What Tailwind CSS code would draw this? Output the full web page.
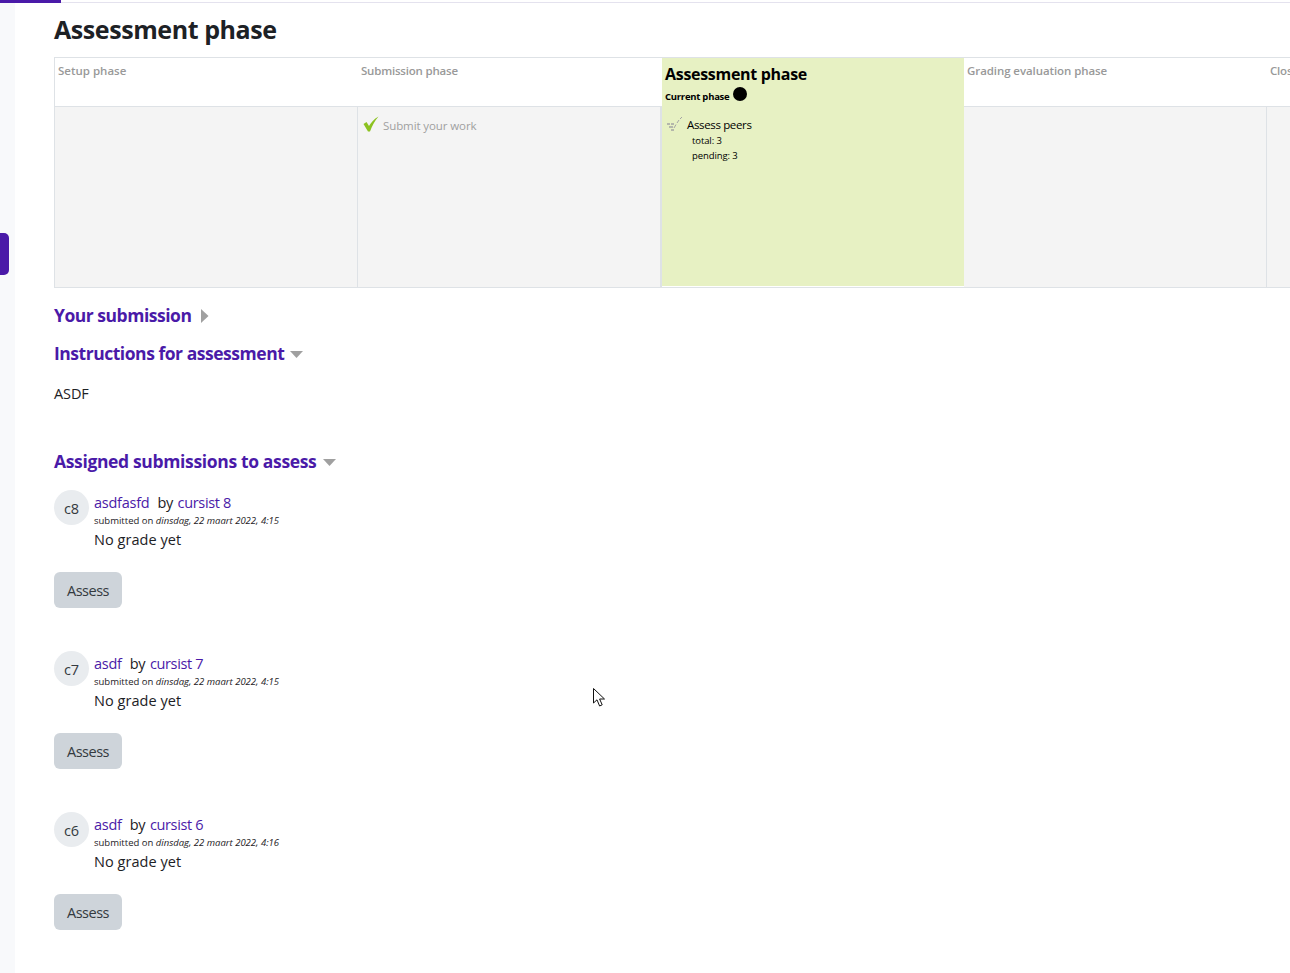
<!DOCTYPE html>
<html lang="en">
<head>
  <meta charset="UTF-8">
  <title>Assessment phase</title>
  <script src="https://cdn.jsdelivr.net/npm/@tailwindcss/browser@4"></script>
</head>
<body class="h-[973px] w-[1290px] overflow-hidden bg-white relative font-['Open_Sans','Noto_Sans',sans-serif] text-[#1d2125]">

  <!-- top progress bar -->
  <div class="h-[3px] border-b border-[#e4e2ee] relative">
    <div class="h-[3px] w-[61px] bg-[#4a1aa8]"></div>
  </div>

  <div class="flex">
    <!-- left strip -->
    <div class="w-[15px] h-[970px] bg-[#f8f9fb] shrink-0"></div>

    <main class="pl-[39px] w-[1275px] overflow-hidden">
      <h2 class="text-[25px] leading-[30px] font-bold tracking-[-0.42px] mt-[11px] mb-[13px]">Assessment phase</h2>

      <!-- phases -->
      <div class="w-[1400px] h-[231px] border-t border-b border-l border-[#dee2e6] flex text-[#999]">
        <div class="w-[303px] shrink-0 flex flex-col">
          <div class="h-[49px] border-b border-[#dee2e6] pl-[3px] pt-[5px] text-[11.5px] leading-[16px] font-semibold">Setup phase</div>
          <div class="flex-1 bg-[#f4f4f4] border-r border-[#dee2e6]"></div>
        </div>
        <div class="w-[304px] shrink-0 flex flex-col">
          <div class="h-[49px] border-b border-[#dee2e6] pl-[3px] pt-[5px] text-[11.5px] leading-[16px] font-semibold tracking-[-0.2px]">Submission phase</div>
          <div class="flex-1 bg-[#f4f4f4] border-r-2 border-[#dee2e6] pl-[5px] pt-[10px] flex items-start">
            <svg class="w-[16px] h-[16px] -mt-[1px] shrink-0" viewBox="0 0 16 16"><path d="M0.5 8 L3.5 6 L6 10 C8 6.5 11 3 15.5 0.5 C11.5 5 9 10 7 15.5 L5 15.5 Z" fill="#8cc220"/></svg>
            <span class="ml-[4px] text-[11.5px] leading-[18px] tracking-[-0.1px] text-[#a0a0a0]">Submit your work</span>
          </div>
        </div>
        <div class="w-[302px] shrink-0 h-[228px] bg-[#e7f1c3] pl-[3px] pt-[5px] text-black">
          <div class="text-[16px] leading-[22px] font-bold tracking-[-0.3px]">Assessment phase</div>
          <div class="flex items-center h-[16px] mt-[4px] text-[9.5px] font-bold tracking-[-0.25px]">
            Current phase
            <span class="ml-[4px] mb-[6px] w-[14px] h-[14px] rounded-full bg-black"></span>
          </div>
          <div class="flex items-start mt-[12px] pl-[2px]">
            <svg class="w-[16px] h-[16px] -mt-[1px] shrink-0" viewBox="0 0 16 16" fill="none" stroke="#a4a4a4" stroke-width="1.4"><path d="M0 8 H3 M4 8 H7 M2 11 H6 M4 14 H7"/><path d="M7 12 L9 8.5 M10 7 L12 4 M13 3 L15 1" stroke-width="1"/></svg>
            <div class="ml-[4px]">
              <div class="text-[11.5px] leading-[16px] tracking-[-0.35px]">Assess peers</div>
              <div class="pl-[5px] text-[9.5px] leading-[15px] tracking-[-0.1px]">total: 3</div>
              <div class="pl-[5px] text-[9.5px] leading-[15px] tracking-[-0.1px]">pending: 3</div>
            </div>
          </div>
        </div>
        <div class="w-[303px] shrink-0 flex flex-col">
          <div class="h-[49px] border-b border-[#dee2e6] pl-[3px] pt-[5px] text-[11.5px] leading-[16px] font-semibold tracking-[-0.08px]">Grading evaluation phase</div>
          <div class="flex-1 bg-[#f4f4f4] border-r border-[#dee2e6]"></div>
        </div>
        <div class="w-[303px] shrink-0 flex flex-col">
          <div class="h-[49px] border-b border-[#dee2e6] pl-[3px] pt-[5px] text-[11.5px] leading-[16px] font-semibold tracking-[-0.2px]">Closed</div>
          <div class="flex-1 bg-[#f4f4f4]"></div>
        </div>
      </div>

      <!-- collapsible sections -->
      <h3 class="flex items-center h-[24px] mt-[15px] text-[#4a1aa8] text-[17.5px] font-bold tracking-[-0.48px]">
        Your submission
        <svg class="ml-[10px] mt-[1px] w-[8px] h-[14px]" viewBox="0 0 8 14"><path d="M0 0 L7.5 7 L0 14 Z" fill="#a0a0a0"/></svg>
      </h3>
      <h3 class="flex items-center h-[24px] mt-[14px] text-[#4a1aa8] text-[17.5px] font-bold tracking-[-0.47px]">
        Instructions for assessment
        <svg class="ml-[6px] mt-[3px] w-[13px] h-[7px]" viewBox="0 0 13 7"><path d="M0 0 H13 L6.5 7 Z" fill="#a0a0a0"/></svg>
      </h3>
      <p class="mt-[18px] text-[14.5px] leading-[22px] tracking-[-0.1px]">ASDF</p>
      <h3 class="flex items-center h-[24px] mt-[44px] text-[#4a1aa8] text-[17.5px] font-bold tracking-[-0.35px]">
        Assigned submissions to assess
        <svg class="ml-[7px] mt-[3px] w-[13px] h-[7px]" viewBox="0 0 13 7"><path d="M0 0 H13 L6.5 7 Z" fill="#a0a0a0"/></svg>
      </h3>

      <!-- submissions -->
      <div class="mt-[19px] h-[161px]">
        <div class="flex">
          <div class="w-[35px] h-[35px] -mt-[2px] pt-[2px] rounded-full bg-[#e9ecef] flex items-center justify-center text-[14.5px] tracking-[-0.2px] text-[#343a40]">c8</div>
          <div class="ml-[5px]">
            <div class="text-[14.5px] leading-[22px] tracking-[-0.25px]"><span class="text-[#4a1aa8]">asdfasfd</span><span class="ml-[8px]">by</span> <span class="ml-[1px] text-[#4a1aa8] tracking-[-0.35px]">cursist 8</span></div>
            <div class="text-[9.5px] leading-[13px]">submitted on <em>dinsdag, 22 maart 2022, 4:15</em></div>
            <div class="mt-[2px] text-[14.5px] leading-[22px] tracking-[0.05px]">No grade yet</div>
          </div>
        </div>
        <button class="mt-[21px] w-[68px] h-[36px] pt-[1px] rounded-[6px] bg-[#ced4da] text-[14.5px] tracking-[-0.5px] text-[#343a40]">Assess</button>
      </div>
      <div class="h-[161px]">
        <div class="flex">
          <div class="w-[35px] h-[35px] -mt-[2px] pt-[2px] rounded-full bg-[#e9ecef] flex items-center justify-center text-[14.5px] tracking-[-0.2px] text-[#343a40]">c7</div>
          <div class="ml-[5px]">
            <div class="text-[14.5px] leading-[22px] tracking-[-0.25px]"><span class="text-[#4a1aa8]">asdf</span><span class="ml-[8px]">by</span> <span class="ml-[1px] text-[#4a1aa8] tracking-[-0.35px]">cursist 7</span></div>
            <div class="text-[9.5px] leading-[13px]">submitted on <em>dinsdag, 22 maart 2022, 4:15</em></div>
            <div class="mt-[2px] text-[14.5px] leading-[22px] tracking-[0.05px]">No grade yet</div>
          </div>
        </div>
        <button class="mt-[21px] w-[68px] h-[36px] pt-[1px] rounded-[6px] bg-[#ced4da] text-[14.5px] tracking-[-0.5px] text-[#343a40]">Assess</button>
      </div>
      <div class="h-[161px]">
        <div class="flex">
          <div class="w-[35px] h-[35px] -mt-[2px] pt-[2px] rounded-full bg-[#e9ecef] flex items-center justify-center text-[14.5px] tracking-[-0.2px] text-[#343a40]">c6</div>
          <div class="ml-[5px]">
            <div class="text-[14.5px] leading-[22px] tracking-[-0.25px]"><span class="text-[#4a1aa8]">asdf</span><span class="ml-[8px]">by</span> <span class="ml-[1px] text-[#4a1aa8] tracking-[-0.35px]">cursist 6</span></div>
            <div class="text-[9.5px] leading-[13px]">submitted on <em>dinsdag, 22 maart 2022, 4:16</em></div>
            <div class="mt-[2px] text-[14.5px] leading-[22px] tracking-[0.05px]">No grade yet</div>
          </div>
        </div>
        <button class="mt-[21px] w-[68px] h-[36px] pt-[1px] rounded-[6px] bg-[#ced4da] text-[14.5px] tracking-[-0.5px] text-[#343a40]">Assess</button>
      </div>
    </main>
  </div>

  <!-- purple drawer handle -->
  <div class="absolute left-0 top-[233px] w-[9px] h-[42px] bg-[#4a1aa8] rounded-r-[5px]"></div>

  <!-- mouse cursor -->
  <svg class="absolute left-[592px] top-[687px] w-[15px] h-[22px]" viewBox="0 0 15 22"><path d="M1.5 1.5 V16 L5 12.8 L7.6 19 L10.2 17.8 L7.6 12 H12.5 Z" fill="#fff" stroke="#111" stroke-width="1"/></svg>
</body>
</html>
